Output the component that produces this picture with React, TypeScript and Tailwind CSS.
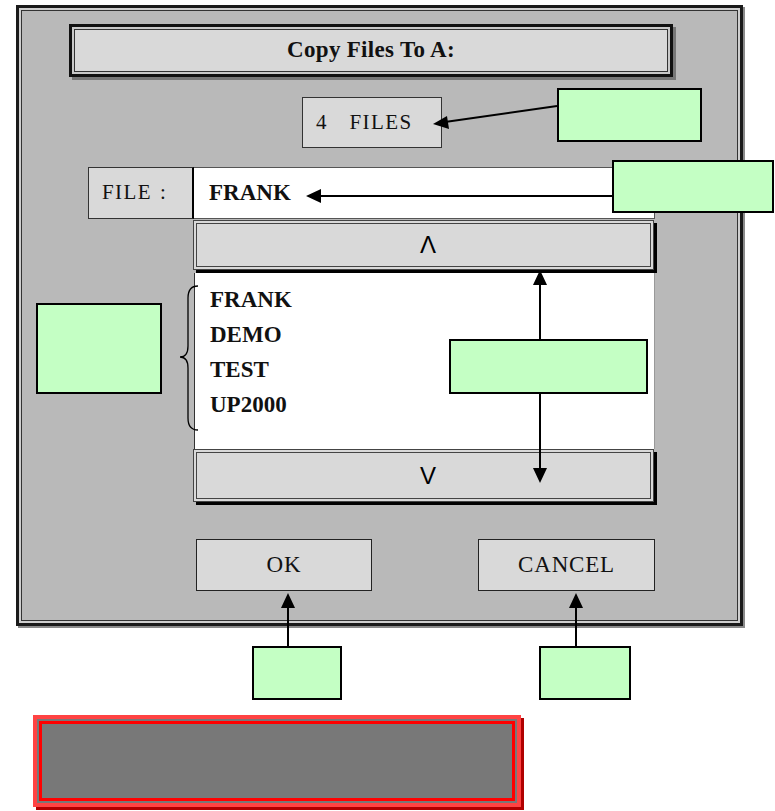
import React from "react";

const serif = { fontFamily: '"Liberation Serif", "Times New Roman", serif' };
const sans = { fontFamily: '"Liberation Sans", Arial, sans-serif' };

function Callout({ className }: { className: string }) {
  return <div className={`absolute border-2 border-black bg-[#c4ffc4] ${className}`} />;
}

export default function App() {
  return (
    <div className="relative w-[775px] h-[811px] overflow-hidden bg-white flex flex-col" style={serif}>
      {/* Dialog */}
      <div className="ml-[16px] mt-[5px] w-[727px] h-[621px] border-[3px] border-[#1a1a1a] bg-[#b9b9b9] flex flex-col shadow-[inset_0_0_0_2px_#cfcfcf,inset_0_0_0_3px_#333,2px_2px_0_#8a8a8a]">
        {/* Title */}
        <div className="ml-[50px] mt-[16px] w-[604px] h-[53px] border-[3px] border-[#111] bg-[#d9d9d9] flex items-center justify-center shadow-[inset_0_0_0_2px_#c9c9c9,inset_0_0_0_3px_#333,3px_3px_0_#777]">
          <span className="text-[23px] font-bold text-[#111] tracking-[0.3px]">Copy Files To A:</span>
        </div>

        {/* 4 FILES */}
        <div className="ml-[283px] mt-[20px] w-[140px] h-[51px] border border-[#333] bg-[#d9d9d9] flex items-center pl-[13px] text-[21px] text-[#111]">
          <span>4</span>
          <span className="ml-[23px] tracking-[1.4px]">FILES</span>
        </div>

        {/* FILE row */}
        <div className="ml-[69px] mt-[19px] flex h-[52px]">
          <div className="w-[106px] h-full border border-[#333] border-r-2 border-r-black bg-[#d9d9d9] flex items-center pl-[13px] text-[21px] text-[#111]">
            <span className="tracking-[1.4px]">FILE</span>
            <span className="ml-[8px]">:</span>
          </div>
          <div className="w-[461px] h-full border-y border-r border-[#555] bg-white flex items-center pl-[15px]">
            <span className="text-[23px] font-bold text-[#111]">FRANK</span>
          </div>
        </div>

        {/* Up button */}
        <div className="ml-[174px] mt-[1px] w-[461px] h-[50px] border border-[#444] bg-[#d9d9d9] flex items-center justify-center pl-[9px] shadow-[inset_0_0_0_2px_#d9d9d9,inset_0_0_0_3px_#444,3px_3px_0_#000]" style={sans}>
          <span className="text-[24px] text-black">Λ</span>
        </div>

        {/* List */}
        <div className="ml-[175px] mt-[3px] w-[461px] h-[176px] bg-white border-l border-l-[#333] border-r border-r-[#999] pt-[9px] pl-[15px]">
          {["FRANK", "DEMO", "TEST", "UP2000"].map((n) => (
            <div key={n} className="h-[35px] leading-[35px] text-[23px] font-bold text-[#111]">
              {n}
            </div>
          ))}
        </div>

        {/* Down button */}
        <div className="ml-[174px] w-[461px] h-[53px] border border-[#444] bg-[#d9d9d9] flex items-center justify-center pl-[9px] shadow-[inset_0_0_0_2px_#d9d9d9,inset_0_0_0_3px_#444,3px_3px_0_#000]" style={sans}>
          <span className="text-[24px] text-black">V</span>
        </div>

        {/* OK / CANCEL */}
        <div className="ml-[177px] mt-[37px] flex gap-[106px]">
          <div className="w-[176px] h-[52px] border border-[#222] bg-[#d9d9d9] flex items-center justify-center">
            <span className="text-[23px] text-[#111] tracking-[1px]">OK</span>
          </div>
          <div className="w-[177px] h-[52px] border border-[#222] bg-[#d9d9d9] flex items-center justify-center">
            <span className="text-[23px] text-[#111] tracking-[0.8px]">CANCEL</span>
          </div>
        </div>
      </div>

      {/* Red box */}
      <div className="ml-[33px] mt-[89px] w-[488px] h-[92px] border-4 border-[#ff4343] bg-[#787878] shadow-[inset_0_0_0_2px_#787878,inset_0_0_0_5px_#ff0000,3px_3px_0_#b00000]" />

      {/* Callouts */}
      <Callout className="left-[557px] top-[88px] w-[145px] h-[54px]" />
      <Callout className="left-[612px] top-[160px] w-[162px] h-[53px]" />
      <Callout className="left-[36px] top-[303px] w-[126px] h-[91px]" />
      <Callout className="left-[449px] top-[339px] w-[199px] h-[55px]" />
      <Callout className="left-[252px] top-[646px] w-[90px] h-[54px]" />
      <Callout className="left-[539px] top-[646px] w-[92px] h-[54px]" />

      {/* Arrows and brace */}
      <svg className="absolute left-0 top-0 pointer-events-none" width="775" height="811" viewBox="0 0 775 811">
        <g stroke="#000" strokeWidth="2" fill="none">
          <line x1="557" y1="106" x2="445" y2="122" />
          <line x1="612" y1="196" x2="318" y2="196" />
          <line x1="540" y1="339" x2="540" y2="283" />
          <line x1="540" y1="394" x2="540" y2="470" />
          <line x1="288" y1="646" x2="288" y2="606" />
          <line x1="576" y1="646" x2="576" y2="606" />
        </g>
        <g fill="#000">
          <polygon points="433,124 447,116 449,129" />
          <polygon points="306,196 321,189 321,203" />
          <polygon points="540,270 533,285 547,285" />
          <polygon points="540,483 533,468 547,468" />
          <polygon points="288,593 281,608 295,608" />
          <polygon points="576,593 569,608 583,608" />
        </g>
        <path
          d="M198,286 Q188,286 188,298 L188,346 Q188,357 180,357 Q188,357 188,368 L188,418 Q188,430 198,430"
          stroke="#000"
          strokeWidth="1.3"
          fill="none"
        />
      </svg>
    </div>
  );
}
